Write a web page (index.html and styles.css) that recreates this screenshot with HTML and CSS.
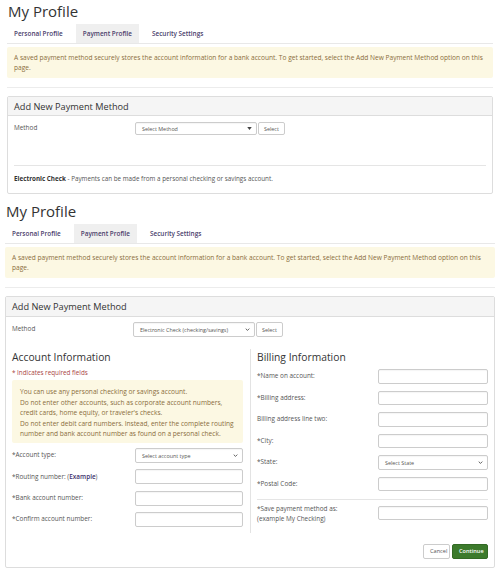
FILE: index.html
```html
<!DOCTYPE html>
<html lang="en">
<head>
<meta charset="utf-8">
<title>My Profile</title>
<link rel="stylesheet" href="styles.css">
</head>
<body>
<div class="screen s1">
  <h1 class="title">My Profile</h1>
  <nav class="tabs">
    <a class="tab">Personal Profile</a>
    <a class="tab active">Payment Profile</a>
    <a class="tab">Security Settings</a>
  </nav>
  <div class="alert">A saved payment method securely stores the account information for a bank account. To get started, select the Add New Payment Method option on this page.</div>
  <hr class="sep">
  <section class="panel">
    <div class="panel-head">Add New Payment Method</div>
    <div class="panel-body short">
      <div class="method-row">
        <span class="label">Method</span>
        <div class="select-group">
          <div class="select method-select"><span>Select Method</span><svg class="tri" viewBox="0 0 6 4" width="5" height="3"><path d="M0 0H6L3 4Z" fill="#444"/></svg></div>
          <button class="btn">Select</button>
        </div>
      </div>
      <hr class="inner">
      <p class="note"><b>Electronic Check</b> - Payments can be made from a personal checking or savings account.</p>
    </div>
  </section>
</div>

<div class="screen s2">
  <h1 class="title">My Profile</h1>
  <nav class="tabs">
    <a class="tab">Personal Profile</a>
    <a class="tab active">Payment Profile</a>
    <a class="tab">Security Settings</a>
  </nav>
  <div class="alert">A saved payment method securely stores the account information for a bank account. To get started, select the Add New Payment Method option on this page.</div>
  <hr class="sep">
  <section class="panel">
    <div class="panel-head">Add New Payment Method</div>
    <div class="panel-body">
      <div class="method-row">
        <span class="label">Method</span>
        <div class="select-group">
          <div class="select method-select tall"><span>Electronic Check (checking/savings)</span><svg class="chev" viewBox="0 0 8 5" width="5" height="3"><path d="M1 1L4 4L7 1" fill="none" stroke="#444" stroke-width="1.4"/></svg></div>
          <button class="btn tall">Select</button>
        </div>
      </div>
      <div class="columns">
        <div class="col left">
          <h2 class="col-title">Account Information</h2>
          <p class="required">* Indicates required fields</p>
          <div class="info-box">
            <p>You can use any personal checking or savings account.</p>
            <p>Do not enter other accounts, such as corporate account numbers, credit cards, home equity, or traveler's checks.</p>
            <p>Do not enter debit card numbers. Instead, enter the complete routing number and bank account number as found on a personal check.</p>
          </div>
          <div class="rows left-rows">
            <div class="row"><span class="label">*Account type:</span><div class="select field"><span>Select account type</span><svg class="chev" viewBox="0 0 8 5" width="5" height="3"><path d="M1 1L4 4L7 1" fill="none" stroke="#444" stroke-width="1.4"/></svg></div></div>
            <div class="row"><span class="label">*Routing number: (<a class="link">Example</a>)</span><div class="input field"></div></div>
            <div class="row"><span class="label">*Bank account number:</span><div class="input field"></div></div>
            <div class="row"><span class="label">*Confirm account number:</span><div class="input field"></div></div>
          </div>
        </div>
        <div class="col right">
          <h2 class="col-title">Billing Information</h2>
          <div class="rows right-rows">
            <div class="row"><span class="label">*Name on account:</span><div class="input field wide"></div></div>
            <div class="row"><span class="label">*Billing address:</span><div class="input field wide"></div></div>
            <div class="row"><span class="label">Billing address line two:</span><div class="input field wide"></div></div>
            <div class="row"><span class="label">*City:</span><div class="input field wide"></div></div>
            <div class="row"><span class="label">*State:</span><div class="select field wide"><span>Select State</span><svg class="chev" viewBox="0 0 8 5" width="5" height="3"><path d="M1 1L4 4L7 1" fill="none" stroke="#444" stroke-width="1.4"/></svg></div></div>
            <div class="row"><span class="label">*Postal Code:</span><div class="input field wide"></div></div>
          </div>
          <hr class="col-sep">
          <div class="row save-row"><span class="label">*Save payment method as:<br>(example My Checking)</span><div class="input field wide"></div></div>
        </div>
      </div>
      <div class="actions">
        <button class="btn act cancel">Cancel</button>
        <button class="btn act continue">Continue</button>
      </div>
    </div>
  </section>
</div>
</body>
</html>
```

FILE: styles.css
```css
* { box-sizing: border-box; }
html, body { margin: 0; padding: 0; background: #fff; }
body {
  font-family: "Open Sans", "Noto Sans", sans-serif;
  color: #555;
  width: 500px;
  overflow: hidden;
}
.screen { height: 200px; padding: 0 7px; }
.s2 { height: 379px; padding: 0 5px; }

.title {
  margin: 0 0 0 1px;
  font-size: 15px;
  line-height: 22px;
  font-weight: 400;
  color: #333;
}
.tabs {
  margin-top: 2px;
  height: 20px;
  display: flex;
  border-bottom: 1px solid #e8e8e8;
}
.tab {
  display: flex;
  align-items: center;
  padding: 0 7px;
  margin-right: 6px;
  font-size: 6.4px;
  font-weight: 600;
  color: #4a3d6b;
}
.tab.active { background: #efefef; }

.alert {
  margin-top: 3px;
  background: #fcf8e3;
  color: #8a6d3b;
  font-size: 6.6px;
  line-height: 9.5px;
  padding: 6px 7px;
  border-radius: 2px;
}
.sep {
  margin: 9px 0 8px;
  border: 0;
  border-top: 1px solid #ececec;
  height: 0;
}
.panel {
  border: 1px solid #ddd;
  border-radius: 2px;
  background: #fff;
}
.panel-head {
  height: 19px;
  background: #f5f5f5;
  border-bottom: 1px solid #ddd;
  padding: 0 6px;
  display: flex;
  align-items: center;
  font-size: 9.2px;
  color: #333;
}
.s2 .panel-head { height: 20px; }
.panel-body { padding: 6px 6px 10px; }
.s2 .panel-body { padding: 5px 6px 8px; }

.label { font-size: 6.4px; color: #555; line-height: 10.5px; }
.method-row { display: flex; align-items: center; height: 13px; }
.s2 .method-row { height: 15px; }
.method-row .label { width: 121px; }
.select-group { display: flex; height: 100%; }
.select, .input {
  border: 1px solid #ccc;
  border-radius: 2px;
  background: #fff;
  box-shadow: inset 0 1px 1px rgba(0,0,0,0.04);
}
.select {
  display: flex;
  align-items: center;
  justify-content: space-between;
  padding: 0 4px 0 6px;
  font-size: 5.4px;
  color: #555;
}
.method-select { width: 122px; height: 13px; }
.method-select.tall { height: 15px; }
.btn {
  font-family: inherit;
  font-size: 5.4px;
  color: #555;
  background: #fff;
  border: 1px solid #ccc;
  border-radius: 2px;
  padding: 0 5px;
  height: 13px;
  margin: 0 0 0 1px;
}
.btn.tall { height: 15px; }

.inner {
  margin: 30px 0 0;
  border: 0;
  border-top: 1px solid #e5e5e5;
}
.note {
  margin: 8px 0 0;
  font-size: 6.3px;
  line-height: 9px;
  color: #555;
}
.note b { color: #333; font-weight: 700; }

.columns {
  display: grid;
  grid-template-columns: 231px 1fr;
  column-gap: 7px;
  margin-top: 12px;
}
.col.right { border-left: 1px solid #e3e3e3; padding: 0 0 8px 6px; }
.col-title {
  margin: 0;
  font-size: 10.3px;
  line-height: 16px;
  font-weight: 500;
  color: #333;
}
.required {
  margin: 3px 0 0;
  font-size: 6.3px;
  line-height: 9px;
  color: #a94442;
}
.info-box {
  margin-top: 3px;
  background: #fcf8e3;
  color: #8a6d3b;
  padding: 7px 8px 4px;
  font-size: 6.6px;
  line-height: 10px;
  border-radius: 2px;
}
.info-box p { margin: 0 0 1px; }
.info-box p:last-child { margin-bottom: 0; }

.rows { display: flex; flex-direction: column; }
.left-rows { margin-top: 5px; gap: 6.3px; }
.right-rows { margin-top: 4px; gap: 6.5px; }
.row {
  display: flex;
  align-items: center;
  justify-content: space-between;
  height: 15px;
}
.field { width: 108px; height: 15px; }
.field.wide { width: 110px; height: 14.5px; }
.link { color: #3c2d6b; font-weight: 600; }

.col-sep {
  margin: 7px 0 0;
  border: 0;
  border-top: 1px solid #e5e5e5;
}
.save-row { height: auto; align-items: flex-start; margin-top: 4px; }
.save-row .field { margin-top: 2px; }

.actions {
  display: flex;
  justify-content: flex-end;
  gap: 2px;
  margin-top: 11px;
}
.btn.act { height: 15px; font-size: 5.6px; padding: 0 6px; margin: 0; }
.cancel { width: 27px; padding: 0; }
.continue {
  width: 36px;
  background: #3c7a2c;
  border-color: #336a25;
  color: #fff;
  font-weight: 600;
}
```
